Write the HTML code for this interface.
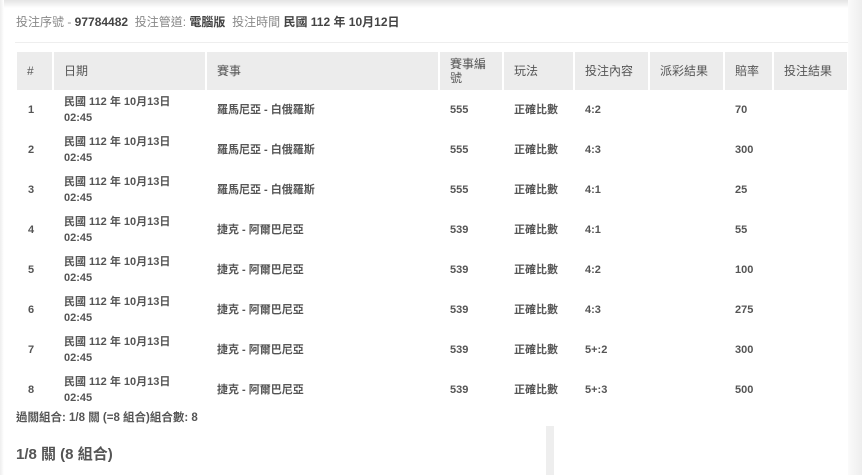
<!DOCTYPE html>
<html><head><meta charset="utf-8"><style>
*{margin:0;padding:0;box-sizing:border-box}
body{width:862px;height:475px;overflow:hidden;background:#fff;font-family:"Liberation Sans","Noto Sans CJK TC",sans-serif;color:#555;position:relative}
.rbar{position:absolute;right:0;top:0;width:14px;height:475px;background:linear-gradient(to right,#fafafa,#eee)}
.tsh{position:absolute;left:0;top:0;width:862px;height:8px;background:linear-gradient(#e4e4e4,#fff)}
.lsh{position:absolute;left:0;top:0;width:4px;height:475px;background:linear-gradient(to right,#eee,#fff)}
.top{position:absolute;left:16px;top:14px;font-size:12px;line-height:16px;color:#888;white-space:nowrap}
.top b{color:#444}
.hr{position:absolute;left:15px;top:42px;width:833px;height:1px;background:#eee}
table{position:absolute;left:16px;top:52px;border-collapse:collapse;table-layout:fixed;width:830px}
th{background:#ececec;font-weight:normal;font-size:12px;text-align:left;height:38px;padding:0 0 0 10px;border-left:2px solid #fff;line-height:14px;vertical-align:middle}
th:first-child{border-left:none}
td{font-size:11px;font-weight:bold;height:40px;padding:0 0 0 10px;vertical-align:middle;line-height:16px;border-left:2px solid transparent}
.foot{position:absolute;left:16px;top:409px;font-size:11.5px;font-weight:bold;white-space:nowrap}
.h{position:absolute;left:16px;top:443px;font-size:15px;font-weight:bold}
.vb{position:absolute;left:546px;top:426px;width:8px;height:49px;background:#eee}
</style></head><body>
<div class="tsh"></div><div class="lsh"></div><div class="rbar"></div>
<div class="top">投注序號 - <b>97784482</b>&nbsp; 投注管道: <b>電腦版</b>&nbsp; 投注時間 <b>民國 112 年 10月12日</b></div>
<div class="hr"></div>
<table>
<colgroup><col style="width:36px"><col style="width:153px"><col style="width:233px"><col style="width:64px"><col style="width:71px"><col style="width:75px"><col style="width:75px"><col style="width:49px"><col style="width:74px"></colgroup>
<tr><th>#</th><th>日期</th><th>賽事</th><th>賽事編<br>號</th><th>玩法</th><th>投注內容</th><th>派彩結果</th><th>賠率</th><th>投注結果</th></tr>
<tr><td>1</td><td>民國 112 年 10月13日<br>02:45</td><td>羅馬尼亞 - 白俄羅斯</td><td>555</td><td>正確比數</td><td>4:2</td><td></td><td>70</td><td></td></tr>
<tr><td>2</td><td>民國 112 年 10月13日<br>02:45</td><td>羅馬尼亞 - 白俄羅斯</td><td>555</td><td>正確比數</td><td>4:3</td><td></td><td>300</td><td></td></tr>
<tr><td>3</td><td>民國 112 年 10月13日<br>02:45</td><td>羅馬尼亞 - 白俄羅斯</td><td>555</td><td>正確比數</td><td>4:1</td><td></td><td>25</td><td></td></tr>
<tr><td>4</td><td>民國 112 年 10月13日<br>02:45</td><td>捷克 - 阿爾巴尼亞</td><td>539</td><td>正確比數</td><td>4:1</td><td></td><td>55</td><td></td></tr>
<tr><td>5</td><td>民國 112 年 10月13日<br>02:45</td><td>捷克 - 阿爾巴尼亞</td><td>539</td><td>正確比數</td><td>4:2</td><td></td><td>100</td><td></td></tr>
<tr><td>6</td><td>民國 112 年 10月13日<br>02:45</td><td>捷克 - 阿爾巴尼亞</td><td>539</td><td>正確比數</td><td>4:3</td><td></td><td>275</td><td></td></tr>
<tr><td>7</td><td>民國 112 年 10月13日<br>02:45</td><td>捷克 - 阿爾巴尼亞</td><td>539</td><td>正確比數</td><td>5+:2</td><td></td><td>300</td><td></td></tr>
<tr><td>8</td><td>民國 112 年 10月13日<br>02:45</td><td>捷克 - 阿爾巴尼亞</td><td>539</td><td>正確比數</td><td>5+:3</td><td></td><td>500</td><td></td></tr>
</table>
<div class="foot">過關組合: 1/8 關 (=8 組合)組合數: 8</div>
<div class="h">1/8 關 (8 組合)</div>
<div class="vb"></div>
</body></html>
